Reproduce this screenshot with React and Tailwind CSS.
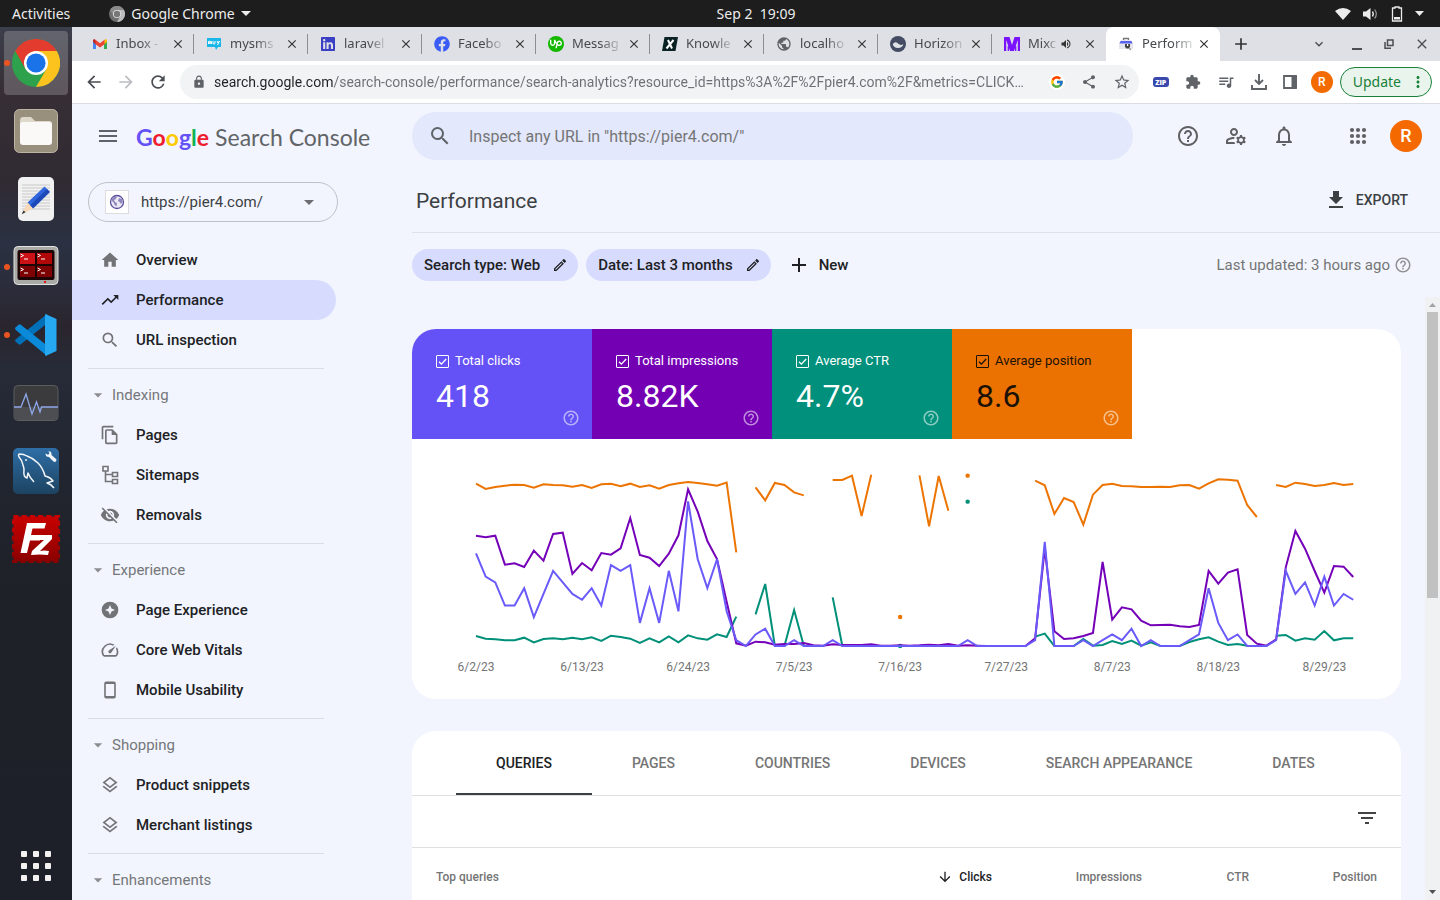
import React from "react";
import {
  MdHome, MdTrendingUp, MdSearch, MdOutlineFileCopy, MdVisibilityOff, MdOutlineSpeed,
  MdOutlineLayers, MdHelpOutline, MdOutlineManageAccounts, MdNotificationsNone,
  MdFileDownload, MdOutlineEdit, MdAdd, MdFilterList, MdArrowDownward, MdExtension,
  MdQueueMusic, MdArrowBack, MdArrowForward, MdRefresh, MdLock, MdShare, MdStarBorder,
  MdMoreVert, MdClose, MdMenu, MdArrowDropDown, MdVolumeUp, MdExpandMore, MdPublic,
} from "react-icons/md";
import { FcGoogle } from "react-icons/fc";
import { SiUpwork } from "react-icons/si";
import { FaFacebook, FaLinkedin } from "react-icons/fa";

/* ---------- chart data (one entry per day, 6/2/23 to 9/1/23) ---------- */

const N = null;
const clicks = [
  16, 12, 11, 7, 7, 10, 5, 9, 13, 11, 9, 8, 10, 7, 14, 13, 14, 4, 10, 4, 13, 6, 25, 15, 10, 15, 6, 1, 0, 2,
  3, 0, 0, 1, 0, 0, 0, 1, 0, 0, 0, 0, 0, 0, 0, 0, 0, 0, 0, 0, 0, 1, 0, 0, 0, 0, 0, 0, 1, 18,
  0, 0, 0, 1, 0, 1, 2, 1, 3, 0, 1, 0, 0, 0, 1, 2, 10, 4, 1, 2, 0, 0, 0, 1, 13, 9, 11, 7, 12, 7, 9, 8,
].map((c) => 558 - c * 17.35);
const impressions = [
  227, 232, 227, 314, 310, 321, 272, 302, 222, 218, 342, 309, 331, 279, 284, 265, 174, 285, 293, 318, 281,
  226, 88, 155, 243, 297, 425, 550, 557, 545, 547, 554, 552, 552, 549, 556, 557, 553, 555, 555, 555, 553,
  557, 557, 556, 557, 556, 554, 556, 552, 557, 556, 557, 558, 558, 558, 558, 558, 535, 266, 514, 537, 535,
  528, 519, 306, 479, 442, 448, 482, 496, 495, 494, 499, 501, 495, 333, 371, 338, 328, 525, 551, 557, 538,
  322, 213, 266, 333, 398, 318, 320, 351,
];
const ctr = [
  528, 536, 538, 541, 541, 533, 547, 537, 535, 538, 533, 538, 532, 543, 527, 531, 536, 549, 535, 547, 529,
  547, 526, 535, 539, 523, 531, 470, N, 463, 372, 557, 557, 450, 557, N, N, 412, 557, 558, 558, 558, N, N,
  558, N, N, N, N, N, N, 125, N, N, N, N, N, N, 530, 521, 558, 558, 558, 537, 557, 555, 543, 552, 542, 557,
  547, 558, 558, 558, 546, 538, 532, 545, 555, 552, 557, N, N, 527, 525, 542, 535, 539, 513, 541, 535, 535,
];
const position = [
  71, 87, 81, 77, 74, 75, 83, 73, 75, 76, 80, 75, 84, 73, 71, 79, 71, 81, 76, 86, 75, 70, 66, 69, 73, 77,
  68, 277, N, 82, 121, 69, 75, 97, 106, N, N, 60, 60, 47, 168, 44, N, N, 471, N, 46, 199, 48, 152, N, 47,
  N, N, N, N, N, N, 62, 76, 162, 114, 126, 194, 104, 75, 71, 78, 79, 81, 81, 80, 81, 76, 75, 86, 70, 58,
  59, 62, 135, 171, N, 75, 81, 68, 72, 78, 75, 69, 75, 72,
];
const series = [
  { color: "#009079", data: ctr },
  { color: "#ec7400", data: position },
  { color: "#7400b8", data: impressions },
  { color: "#6a5af9", data: clicks },
];
const dates = ["6/2/23", "6/13/23", "6/24/23", "7/5/23", "7/16/23", "7/27/23", "8/7/23", "8/18/23", "8/29/23"];

const px = (i) => 64 + i * 9.64;
const py = (v) => 21 + v / 3;

function segments(data) {
  const out = [];
  let cur = [];
  data.forEach((v, i) => {
    if (v === null) {
      if (cur.length) out.push(cur);
      cur = [];
    } else cur.push([px(i), py(v)]);
  });
  if (cur.length) out.push(cur);
  return out;
}

function Chart() {
  return (
    <svg viewBox="0 0 989 260" className="block w-full" role="img" aria-label="Performance over time">
      {series.map((s) =>
        segments(s.data).map((seg, k) =>
          seg.length === 1 ? (
            <circle key={s.color + k} cx={seg[0][0]} cy={seg[0][1]} r="2.2" fill={s.color} />
          ) : (
            <polyline key={s.color + k} points={seg.map((p) => p.join(",")).join(" ")} fill="none" stroke={s.color} strokeWidth="2" />
          )
        )
      )}
      {dates.map((d, i) => (
        <text key={d} x={px(i * 11)} y="232" textAnchor="middle" fontSize="12" fill="#757575">{d}</text>
      ))}
    </svg>
  );
}

/* ---------- desktop shell ---------- */

function ChromeLogo({ size, gray }) {
  const c = gray ? ["#8a8a8a", "#6f6f6f", "#bdbdbd", "#e5e5e5", "#777"] : ["#e33b2e", "#2da14c", "#fcc31e", "#fff", "#1a73e8"];
  return (
    <svg width={size} height={size} viewBox="0 0 48 48" aria-hidden="true">
      <circle cx="24" cy="24" r="24" fill={c[1]} />
      <path d="M3.2 12A24 24 0 0 1 44.8 12H24L13.6 30Z" fill={c[0]} />
      <path d="M44.8 12A24 24 0 0 1 24 48L34.4 30 24 12Z" fill={c[2]} />
      <circle cx="24" cy="24" r="12" fill={c[3]} />
      <circle cx="24" cy="24" r="9.6" fill={c[4]} />
    </svg>
  );
}

function TopBar() {
  return (
    <header className="flex h-[27px] shrink-0 items-center bg-[#1d1d1d] px-3 font-['Noto_Sans',sans-serif] text-sm leading-5 text-[#ececec]">
      <div className="flex flex-1 items-center gap-[39px]">
        <button>Activities</button>
        <button className="flex items-center gap-1.5">
          <ChromeLogo size={16} gray />
          <span>Google Chrome</span>
          <svg width="10" height="5" viewBox="0 0 10 5" aria-hidden="true"><path d="M0 0h10L5 5z" fill="currentColor" /></svg>
        </button>
      </div>
      <button className="ml-[72px] whitespace-pre">Sep 2  19:09</button>
      <div className="flex flex-1 justify-end">
        <button aria-label="System menu" className="flex items-center gap-3 pr-1">
          <svg width="16" height="12" viewBox="0 0 16 12"><path d="M8 12 0 3Q8-3 16 3Z" fill="currentColor" /></svg>
          <svg width="16" height="14" viewBox="0 0 16 14" fill="none" stroke="currentColor">
            <path d="M0 4.5h3L7.5 1v12L3 9.500H0z" fill="currentColor" stroke="none" />
            <path d="M9.500 4.500q1.600 2.500 0 5" strokeWidth="1.400" />
            <path d="M11.600 2.500q3.400 4.500 0 9" strokeWidth="1.200" opacity=".6" />
          </svg>
          <svg width="12" height="16" viewBox="0 0 12 16"><path d="M4 1h4v1h2.500v13h-9V2H4z" fill="none" stroke="currentColor" strokeWidth="1.300" /><path d="M3 11h6v2.500H3z" fill="currentColor" /></svg>
          <svg width="9" height="5" viewBox="0 0 9 5"><path d="M0 0h9L4.500 5z" fill="currentColor" /></svg>
        </button>
      </div>
    </header>
  );
}

const FilesIcon = () => (
  <svg width="48" height="48" viewBox="0 0 48 48">
    <rect x="2.500" y="2.500" width="43" height="43" rx="5" fill="#98907c" stroke="#bcb5a3" />
    <path d="M8 14q0-4 3-4h8l4 4h14q3 0 3 3v6H8z" fill="#ddd8ca" />
    <rect x="8" y="15" width="32" height="23" rx="3" fill="#faf9f7" />
  </svg>
);
const EditorIcon = () => (
  <svg width="48" height="48" viewBox="0 0 48 48">
    <rect x="6" y="2" width="36" height="44" rx="5" fill="#f1f1f1" />
    <path d="M10 10h28M10 13h28M10 16h28M10 19h28M10 22h28M10 25h28M10 28h28M10 31h28M10 34h28" stroke="#c9c9c9" strokeWidth="1" />
    <path d="M32.500 11.500 37.800 17 21 33.500l-5.500-6z" fill="#2f66dd" />
    <path d="m35 14 2.800 3L21 33.500 18 30.500z" fill="#1c48b8" />
    <path d="M15.500 27.500 10 39l11-5.500z" fill="#f7d9b8" />
    <path d="m11.500 35.500-1.800 3.800 3.900-2z" fill="#333" />
  </svg>
);
const TerminatorIcon = () => (
  <svg width="48" height="48" viewBox="0 0 48 48">
    <rect x="2" y="3.500" width="44" height="38" rx="4" fill="#a9aaa6" stroke="#e3e3e0" />
    <rect x="5.500" y="7" width="37" height="30" rx="2" fill="#1d0505" />
    <path d="M8 10h15v11H8z" fill="#cc1216" />
    <path d="M25 10h15v11H25z" fill="#b00709" />
    <path d="M8 23h15v11H8zM25 23h15v11H25z" fill="#7d0203" />
    <path d="m8.500 11 3 1.500-3 1.500M12 16h4M25.500 11l3 1.500-3 1.500M29 16h4M8.500 25l3 1.500-3 1.500M12 30h4M25.500 25l3 1.500-3 1.500M29 30h4" stroke="#fff" fill="none" strokeWidth="1" />
    <rect x="32" y="38" width="2" height="2" fill="#e11" />
  </svg>
);
const CodeIcon = () => (
  <svg width="48" height="48" viewBox="0 0 48 48">
    <path d="m3.500 30.500 3 2.800q1 .9 2.300 0L35 12.500V3L3.500 28.500q-1 .9 0 2z" fill="#0070b8" />
    <path d="m3.500 16.500 3-2.800q1-.9 2.300 0L35 34.500V45L3.500 18.800q-1-1 0-2.300z" fill="#0a8ad8" />
    <path d="M34 3.200 44.500 8v32L34 44.800q-1 .2-1-.8V4q0-1 1-.8z" fill="#27a9f2" />
  </svg>
);
const MonitorIcon = () => (
  <svg width="48" height="48" viewBox="0 0 48 48">
    <rect x="2" y="6.500" width="44" height="35" rx="4" fill="#3b3b3d" stroke="#5d5d5f" />
    <path d="M2.500 28h43v9q0 4-4 4h-35q-4 0-4-4z" fill="#4d4e52" />
    <path d="M2 28h7l5-13 6 20 4.500-12 3.500 10 1.500-5H46" fill="none" stroke="#8ea6ea" strokeWidth="1.300" />
  </svg>
);
const WorkbenchIcon = () => (
  <svg width="48" height="48" viewBox="0 0 48 48">
    <defs><linearGradient id="wb" x1="0" y1="0" x2="0" y2="1"><stop offset="0" stopColor="#2e6ea6" /><stop offset="1" stopColor="#1d4361" /></linearGradient></defs>
    <rect x="1" y="1" width="46" height="46" rx="5" fill="url(#wb)" />
    <path d="M42 41q-3-4-7-5l6-2q-3-4-8-5-2-8-7-13T15 9q-3-2-8-2-1 1 0 3 3 3 4 8 1 3 1 5-1 7 3 8l1-5q2 5 6 9" fill="none" stroke="#f2f6fa" strokeWidth="1.500" strokeLinejoin="round" />
    <circle cx="14" cy="13" r=".9" fill="#fff" />
    <path d="M33.500 6.500q0 3.500 3.500 3.500l4.500 4.500q1.500 1 2.500-.2 1-1.300 0-2.300L39.500 8Q40 4.500 36.500 4l1 2.500-1.500 1.300z" fill="#f2f6fa" />
  </svg>
);
const FilezillaIcon = () => (
  <svg width="48" height="48" viewBox="0 0 48 48">
    <defs><linearGradient id="fz" x1="0" y1="0" x2="0" y2="1"><stop offset="0" stopColor="#c80000" /><stop offset="1" stopColor="#8a0000" /></linearGradient></defs>
    <rect x="1.500" y="1.500" width="45" height="45" fill="url(#fz)" />
    <rect x="1.500" y="1.500" width="45" height="45" fill="none" stroke="url(#fz)" strokeWidth="3" strokeDasharray="5 3.200" />
    <path d="M15 8h19l-1.500 5.500H20.500L19 20h10l-1 5.500H18L15 38H8.500z" fill="#fff" />
    <path d="M25 20h15v4L28 36q4-1 9 0l-1 4q-8-1-17 0l1-4 12-11h-8z" fill="#fff" />
  </svg>
);

const dock = [
  { name: "Google Chrome", icon: <ChromeLogo size={48} />, running: true, active: true },
  { name: "Files", icon: <FilesIcon /> },
  { name: "Text Editor", icon: <EditorIcon /> },
  { name: "Terminator", icon: <TerminatorIcon />, running: true },
  { name: "Visual Studio Code", icon: <CodeIcon />, running: true },
  { name: "System Monitor", icon: <MonitorIcon /> },
  { name: "MySQL Workbench", icon: <WorkbenchIcon /> },
  { name: "FileZilla", icon: <FilezillaIcon /> },
];

function Dock() {
  return (
    <nav aria-label="Dock" className="flex w-[72px] shrink-0 flex-col items-center justify-between bg-[linear-gradient(180deg,#3c3f4c_0px,#382f36_60px,#302a32_150px,#2a3142_215px,#2b2c3a_265px,#2a252d_300px,#272b38_340px,#21252f_450px,#1f2128_560px,#1d2028_100%)] pt-1 pb-[19px]">
      <ul className="flex flex-col gap-1">
        {dock.map((d) => (
          <li key={d.name}>
            <button
              aria-label={d.name}
              className={"relative flex size-16 items-center justify-center rounded " + (d.active ? "bg-white/20" : "")}
            >
              {d.running && <span className="absolute top-[29px] left-0 size-1.5 rounded-full bg-[#e95420]" />}
              {d.icon}
            </button>
          </li>
        ))}
      </ul>
      <button aria-label="Show Applications" className="grid grid-cols-3 gap-1.5">
        {Array.from({ length: 9 }, (_, i) => <span key={i} className="size-1.5 rounded-[1px] bg-[#f2f1f0]" />)}
      </button>
    </nav>
  );
}

/* ---------- browser window ---------- */

const GmailIcon = () => (
  <svg width="16" height="16" viewBox="0 0 16 16">
    <path d="M1 4v9h3V7z" fill="#4285f4" /><path d="M15 4v9h-3V7z" fill="#34a853" />
    <path d="M12 4.500 13.500 3Q15 3 15 4.500V6l-3 2.500z" fill="#fbbc04" /><path d="M1 6V4.500Q1 3 2.500 3L4 4.500v4z" fill="#c5221f" />
    <path d="m3.500 3.700 4.500 3.500 4.500-3.500v4.500L8 11.500 3.500 8.200z" fill="#ea4335" />
  </svg>
);
const MysmsIcon = () => (
  <svg width="16" height="16" viewBox="0 0 16 16">
    <path d="M1 2h14v9h-3l-2 3-1-3H1z" fill="#19b6e8" />
    <path d="M2.500 8V5.500q1.500-1 1.500.5v2-2q1.500-1.500 1.500 0v2M7 5v2.500q1 1 2 0V5M11 5l1 2 1.500-2-2 4" fill="none" stroke="#fff" />
  </svg>
);
const KnowIcon = () => (
  <svg width="16" height="16" viewBox="0 0 16 16">
    <path d="M2.500 1H16l-2.500 14H0z" fill="#0b2224" />
    <path d="m6 4 4 8.500M11.500 4l-7 8.500" stroke="#fff" strokeWidth="2" />
  </svg>
);
const HorizonIcon = () => (
  <svg width="16" height="16" viewBox="0 0 16 16">
    <circle cx="8" cy="8" r="8" fill="#434c63" />
    <path d="M2.800 8q2.400-3 5.200-.5t5.300.5q-.5 3.700-5.300 4-4.800-.3-5.200-4z" fill="#dee1e6" />
  </svg>
);
const MixIcon = () => (
  <svg width="16" height="16" viewBox="0 0 16 16">
    <path d="M0 1h5.500L8 9l2.500-8H16v14h-2.200V4L10 15H6L2.200 4v11H0z" fill="#7a12ff" />
    <path d="M4.300 10v5M11.700 10v5" stroke="#7a12ff" strokeWidth="1.300" />
  </svg>
);
const ConsoleIcon = () => (
  <svg width="16" height="16" viewBox="0 0 16 16">
    <path d="M3 4h10l2 4v5H1V8z" fill="#e6e6ec" />
    <path d="M2.500 5h11l1 2.500h-13z" fill="#5a63f0" /><path d="M5.500 4V2.500h5V4" fill="none" stroke="#777" strokeWidth="1.300" />
    <path d="M7 8h5v3l-1.500 1.500h-2L7 11z" fill="#444" /><path d="M9 8h1.200v2H9z" fill="#fff" />
    <path d="m11 12 2 2" stroke="#999" strokeWidth="1.500" />
  </svg>
);

const tabs = [
  { title: "Inbox -", icon: <GmailIcon /> },
  { title: "mysms", icon: <MysmsIcon /> },
  { title: "laravel", icon: <FaLinkedin className="size-4 text-[#3a3fc4]" /> },
  { title: "Facebo", icon: <FaFacebook className="size-4 text-[#3a5cf5]" /> },
  { title: "Messag", icon: <span className="flex size-4 items-center justify-center rounded-full bg-[#14b800]"><SiUpwork className="size-3 text-white" /></span> },
  { title: "Knowle", icon: <KnowIcon /> },
  { title: "localho", icon: <MdPublic className="size-4 text-[#5f6368]" /> },
  { title: "Horizon", icon: <HorizonIcon /> },
  { title: "Mixc", icon: <MixIcon />, sound: true },
  { title: "Perform", icon: <ConsoleIcon />, active: true },
];

function TabStrip() {
  return (
    <div className="flex h-[34px] shrink-0 items-center bg-[#dee0e6] pl-2 font-['Noto_Sans',sans-serif] text-[13px] text-[#45484d]">
      {tabs.map((t, i) => (
        <div
          key={t.title}
          className={"flex h-full w-[114px] items-center pl-3 " + (t.active ? "rounded-t-lg bg-white" : "")}
        >
          <button className="flex min-w-0 flex-1 items-center gap-2">
            <span className="shrink-0">{t.icon}</span>
            <span className="text-left whitespace-nowrap [mask-image:linear-gradient(90deg,#000_60%,rgba(0,0,0,0.2))]">{t.title}</span>
            {t.sound && <MdVolumeUp className="-ml-1 size-3 shrink-0 text-[#333]" />}
          </button>
          <button aria-label={"Close " + t.title} className="mr-[7px] flex size-4 shrink-0 items-center justify-center"><MdClose className="size-3.5 text-[#333]" /></button>
          <span className={"h-5 w-px shrink-0 " + (i < 8 ? "bg-[#8b8d92]" : "bg-transparent")} />
        </div>
      ))}
      <button aria-label="New tab" className="ml-[11px]"><MdAdd className="size-5 text-[#333]" /></button>
      <div className="ml-auto flex items-center pr-2.5 text-[#4a4d52]">
        <button aria-label="Search tabs" className="mr-[25px]"><MdExpandMore className="size-4 stroke-current" /></button>
        <button aria-label="Minimize" className="mr-[22px] flex h-3 w-2.5 items-end"><span className="h-0.5 w-full bg-current" /></button>
        <button aria-label="Restore" className="mr-5">
          <svg width="10" height="10" viewBox="0 0 10 10" fill="none" stroke="currentColor" strokeWidth="1.500"><path d="M3.500 1h5.500v5.500H3.500zM1 3v6.200h6" /></svg>
        </button>
        <button aria-label="Close window"><MdClose className="size-4" /></button>
      </div>
    </div>
  );
}

function Toolbar() {
  return (
    <div className="flex h-[43px] shrink-0 items-center border-b border-[#dadce4] bg-white pr-2 pl-3 font-['Noto_Sans',sans-serif] text-sm text-[#5f6368]">
      <div className="flex items-center gap-3">
        <button aria-label="Back"><MdArrowBack className="size-5 text-[#4a4d52]" /></button>
        <button aria-label="Forward"><MdArrowForward className="size-5 text-[#bbbdc1]" /></button>
        <button aria-label="Reload"><MdRefresh className="size-5 text-[#4a4d52]" /></button>
      </div>
      <div className="ml-3 flex h-[34px] min-w-0 flex-1 items-center rounded-full bg-[#f1f3f4] pr-2 pl-3">
        <MdLock className="size-3.5 shrink-0" />
        <input
          aria-label="Address and search bar"
          className="mr-3 ml-2 min-w-0 flex-1 bg-[linear-gradient(90deg,#202124_119px,#6b6f75_119px)] bg-clip-text font-[Roboto,sans-serif] text-sm text-ellipsis text-transparent outline-none"
          defaultValue="search.google.com/search-console/performance/search-analytics?resource_id=https%3A%2F%2Fpier4.com%2F&metrics=CLICK…"
        />
        <div className="flex items-center gap-4">
          <button aria-label="Search with Google" className="rounded-full bg-white p-px"><FcGoogle className="size-3.5" /></button>
          <button aria-label="Share"><MdShare className="size-4" /></button>
          <button aria-label="Bookmark"><MdStarBorder className="size-[18px]" /></button>
        </div>
      </div>
      <div className="ml-3.5 flex items-center gap-4">
        <button aria-label="Zip extension" className="flex h-2.5 w-4 items-center justify-center rounded-[3px] bg-[#3949ab] font-['Open_Sans',sans-serif] text-[7px] leading-none font-extrabold text-white">ZIP</button>
        <button aria-label="Extensions"><MdExtension className="size-4" /></button>
        <button aria-label="Media"><MdQueueMusic className="size-[18px]" /></button>
        <button aria-label="Downloads">
          <svg width="16" height="16" viewBox="0 0 16 16" fill="none" stroke="currentColor" strokeWidth="1.900"><path d="M8 0v9M4 6l4 4 4-4M1 11v4h14v-4" /></svg>
        </button>
        <button aria-label="Side panel">
          <svg width="14" height="14" viewBox="0 0 14 14"><path d="M1 1h12v12H1z" fill="none" stroke="currentColor" strokeWidth="1.800" /><path d="M8.500 1H14v12H8.500z" fill="currentColor" /></svg>
        </button>
      </div>
      <button aria-label="Profile" className="ml-3.5 flex size-[22px] items-center justify-center rounded-full bg-[#f26a00] font-[Roboto,sans-serif] text-xs font-medium text-white">R</button>
      <button className="ml-[7px] flex h-[30px] items-center gap-2 rounded-full border border-[#188038] bg-[#e9f5ec] pr-1 pl-3 text-[#188038]">
        Update <MdMoreVert className="size-[18px]" />
      </button>
    </div>
  );
}

/* ---------- search console ---------- */

const SitemapIcon = ({ className }) => (
  <svg viewBox="0 0 20 20" className={className} fill="none" stroke="currentColor" strokeWidth="1.600">
    <path d="M3 1.500h5v4.500H3zM12.500 7.500h5v4h-5zM12.500 14.500h5v4h-5zM5.500 6v10.500h7M5.500 9.500h7" />
  </svg>
);
const PhoneIcon = ({ className }) => (
  <svg viewBox="0 0 20 20" className={className} fill="none" stroke="currentColor">
    <rect x="5" y="2.200" width="10" height="15.600" rx="1.200" strokeWidth="1.600" />
    <path d="M5 3h10M5 17h10" strokeWidth="2" />
  </svg>
);
const GlobeIcon = () => (
  <svg width="16" height="16" viewBox="0 0 16 16">
    <circle cx="8" cy="8" r="6.500" fill="#eceaf5" stroke="#5a4f9e" strokeWidth="1.300" />
    <path d="M3 5q2-3 5-2.500L7 5 5 6l1 2 2 1-.5 3.500Q5 11 5 9L3 7zM10 4l3 1 .5 3-1.500 2-1.500-2-1.500-1z" fill="#8f88bd" />
  </svg>
);
const PageExperienceIcon = ({ className }) => (
  <svg viewBox="0 0 24 24" className={className} fill="currentColor">
    <path fillRule="evenodd" d="M12 2a10 10 0 1 0 0 20 10 10 0 0 0 0-20zm0 4 1.800 4.200L18 12l-4.200 1.800L12 18l-1.800-4.200L6 12l4.200-1.800z" />
  </svg>
);

const navGroups = [
  { items: [["Overview", MdHome], ["Performance", MdTrendingUp], ["URL inspection", MdSearch]] },
  { title: "Indexing", items: [["Pages", MdOutlineFileCopy], ["Sitemaps", SitemapIcon], ["Removals", MdVisibilityOff]] },
  { title: "Experience", items: [["Page Experience", PageExperienceIcon], ["Core Web Vitals", MdOutlineSpeed], ["Mobile Usability", PhoneIcon]] },
  { title: "Shopping", items: [["Product snippets", MdOutlineLayers], ["Merchant listings", MdOutlineLayers]] },
  { title: "Enhancements", items: [] },
];

function Sidebar() {
  return (
    <aside className="flex w-[340px] shrink-0 flex-col overflow-hidden">
      <div className="flex h-16 shrink-0 items-center pl-6">
        <button aria-label="Main menu"><MdMenu className="size-6 text-[#5f6368]" /></button>
        <a href="#home" className="mt-0.5 ml-4 flex items-baseline gap-1.5 font-[Lato,sans-serif] text-[23px] leading-8 whitespace-nowrap text-[#616467]">
          <span className="font-bold">
            <span className="text-[#6552f6]">G</span><span className="text-[#ee1c2e]">o</span><span className="text-[#fbcb05]">o</span><span className="text-[#6552f6]">g</span><span className="text-[#0fb457]">l</span><span className="text-[#ee1c2e]">e</span>
          </span>
          <span>Search Console</span>
        </a>
      </div>
      <button className="mt-3.5 ml-4 flex h-10 w-[250px] shrink-0 items-center rounded-full border border-[#c0c1c6] pr-4 pl-4 text-[15px] text-[#3c4043]">
        <span className="flex size-6 items-center justify-center border border-[#dcdce0] bg-white"><GlobeIcon /></span>
        <span className="ml-3">https://pier4.com/</span>
        <MdArrowDropDown className="ml-auto size-6 text-[#6b6d70]" />
      </button>
      <nav aria-label="Search Console" className="mt-[18px]">
        {navGroups.map((g, gi) => (
          <section key={gi}>
            {gi > 0 && <hr className="mt-2 mr-[88px] mb-1.5 ml-4 border-[#dcdde3]" />}
            {g.title && (
              <button className="flex h-10 items-center pl-4 text-[15px] text-[#75777a]">
                <MdArrowDropDown className="size-5 text-[#8b8d90]" /><span className="ml-1">{g.title}</span>
              </button>
            )}
            {g.items.map(([label, Icon]) => {
              const active = label === "Performance";
              return (
                <a
                  key={label}
                  href={"#" + label}
                  aria-current={active ? "page" : undefined}
                  className={"mr-[76px] flex h-10 items-center gap-4 rounded-r-full pl-7 text-[15px] font-medium text-[#202124] " + (active ? "bg-[#d7dcff]" : "")}
                >
                  <Icon className={"size-5 " + (active ? "text-[#202124]" : "text-[#717376]")} />
                  {label}
                </a>
              );
            })}
          </section>
        ))}
      </nav>
    </aside>
  );
}

const metrics = [
  { label: "Total clicks", value: "418", tile: "bg-[#6552f6] text-white" },
  { label: "Total impressions", value: "8.82K", tile: "bg-[#7400b4] text-white" },
  { label: "Average CTR", value: "4.7%", tile: "bg-[#00907b] text-white" },
  { label: "Average position", value: "8.6", tile: "bg-[#eb7100] text-[#1a1206]" },
];

function Metric({ label, value, tile }) {
  return (
    <div className={"h-[110px] w-[180px] pt-6 pr-3 pl-6 " + tile}>
      <label className="flex h-4 items-center gap-1.5 text-[13px] whitespace-nowrap">
        <span className="grid">
          <input type="checkbox" defaultChecked className="col-start-1 row-start-1 size-[13px] appearance-none rounded-[1px] border border-current" />
          <svg viewBox="0 0 13 13" className="pointer-events-none col-start-1 row-start-1 size-[13px]" fill="none" stroke="currentColor" strokeWidth="1.300"><path d="m3 6.700 2.400 2.400L10.200 4" /></svg>
        </span>
        {label}
      </label>
      <div className="mt-[7px] flex h-[51px] justify-between">
        <span className="text-[32px] leading-10">{value}</span>
        <button aria-label={"Help: " + label} className="self-end"><MdHelpOutline className="size-[18px] text-white/55" /></button>
      </div>
    </div>
  );
}

const reportTabs = ["QUERIES", "PAGES", "COUNTRIES", "DEVICES", "SEARCH APPEARANCE", "DATES"];

function Main() {
  return (
    <main className="flex min-w-0 flex-1 flex-col">
      <div className="flex h-16 shrink-0 items-center pr-[18px]">
        <label className="flex h-12 w-full max-w-[721px] items-center rounded-full bg-[#e3e8fc] pl-4">
          <MdSearch className="size-6 text-[#5f6368]" />
          <input type="search" aria-label="Inspect URL" placeholder={'Inspect any URL in "https://pier4.com/"'} className="ml-[17px] min-w-0 flex-1 bg-transparent pt-0.5 text-base text-[#202124] outline-none placeholder:text-[#757575]" />
        </label>
        <div className="ml-auto flex items-center gap-6 text-[#5f6063]">
          <button aria-label="Help"><MdHelpOutline className="size-6" /></button>
          <button aria-label="Users and permissions"><MdOutlineManageAccounts className="size-6" /></button>
          <button aria-label="Notifications"><MdNotificationsNone className="size-6" /></button>
          <button aria-label="Google apps" className="ml-[26px]">
            <svg width="24" height="24" viewBox="0 0 24 24" fill="currentColor">
              {[6, 12, 18].map((y) => [6, 12, 18].map((x) => <circle key={x + "-" + y} cx={x} cy={y} r="2.100" />))}
            </svg>
          </button>
          <button aria-label="Account" className="-ml-1 flex size-8 items-center justify-center rounded-full bg-[#f46a00] text-lg font-medium text-white">R</button>
        </div>
      </div>

      <div className="flex h-[65px] shrink-0 items-center justify-between border-b border-[#dfe1e6] pr-8 pl-1">
        <h1 className="pt-0.5 text-[21px] leading-7 text-[#3c4043]">Performance</h1>
        <button className="flex items-center gap-2 text-sm font-medium text-[#3c4043]"><MdFileDownload className="size-6" />EXPORT</button>
      </div>

      <div className="flex h-16 shrink-0 items-center pr-7 text-[15px]">
        <div className="flex items-center gap-2 font-medium text-[#202124]">
          <button className="flex h-8 items-center gap-3 rounded-full bg-[#d7dcff] pr-2.5 pl-3">Search type: Web <MdOutlineEdit className="size-4" /></button>
          <button className="flex h-8 items-center gap-3 rounded-full bg-[#d7dcff] pr-2.5 pl-3">Date: Last 3 months <MdOutlineEdit className="size-4" /></button>
          <button className="ml-2 flex items-center gap-2"><MdAdd className="size-6" />New</button>
        </div>
        <p className="ml-auto flex items-center gap-1 text-[#757575]">Last updated: 3 hours ago <MdHelpOutline className="size-[18px] text-[#919296]" /></p>
      </div>

      <div className="flex min-h-0 flex-1">
        <div className="flex min-w-0 flex-1 flex-col gap-8 overflow-hidden pt-8 pr-6">
          <section className="shrink-0 overflow-hidden rounded-3xl bg-white">
            <div className="flex">{metrics.map((m) => <Metric key={m.label} {...m} />)}</div>
            <Chart />
          </section>
          <section className="shrink-0 overflow-hidden rounded-3xl bg-white pb-20">
            <div role="tablist" className="flex h-[65px] border-b border-[#e0e0e0] pl-11 text-sm font-medium text-[#757575]">
              {reportTabs.map((t, i) => (
                <button key={t} role="tab" aria-selected={i === 0} className={"border-b-2 px-10 pt-0.5 whitespace-nowrap " + (i === 0 ? "border-[#3c4043] text-[#202124]" : "border-transparent")}>{t}</button>
              ))}
            </div>
            <div className="flex h-[52px] items-start justify-end border-b border-[#e0e0e0] pt-2.5 pr-[22px]">
              <button aria-label="Filter rows"><MdFilterList className="size-6 text-[#444]" /></button>
            </div>
            <table className="w-full table-fixed text-xs text-[#757575]">
              <thead>
                <tr className="h-[58px]">
                  <th className="pl-6 text-left font-medium">Top queries</th>
                  <th className="w-[150px] font-medium text-[#202124]"><span className="flex items-center justify-end gap-1.5"><MdArrowDownward className="size-4" />Clicks</span></th>
                  <th className="w-[150px] text-right font-medium">Impressions</th>
                  <th className="w-[107px] text-right font-medium">CTR</th>
                  <th className="w-[152px] pr-6 text-right font-medium">Position</th>
                </tr>
              </thead>
            </table>
          </section>
        </div>
        <div aria-hidden="true" className="flex w-[15px] shrink-0 flex-col items-center bg-[#f0f1f2]">
          <svg width="15" height="15" viewBox="0 0 15 15"><path d="M4 10h7L7.500 6z" fill="#a3a3a3" /></svg>
          <span className="h-[286px] w-[11px] bg-[#c1c1c1]" />
          <svg width="15" height="15" viewBox="0 0 15 15" className="mt-auto"><path d="M4 5h7L7.500 9z" fill="#505050" /></svg>
        </div>
      </div>
    </main>
  );
}

export default function App() {
  return (
    <div className="flex h-screen flex-col overflow-hidden font-[Roboto,sans-serif]">
      <TopBar />
      <div className="flex min-h-0 flex-1">
        <Dock />
        <div className="flex min-w-0 flex-1 flex-col">
          <TabStrip />
          <Toolbar />
          <div className="flex min-h-0 flex-1 bg-[#f2f5fd]">
            <Sidebar />
            <Main />
          </div>
        </div>
      </div>
    </div>
  );
}
